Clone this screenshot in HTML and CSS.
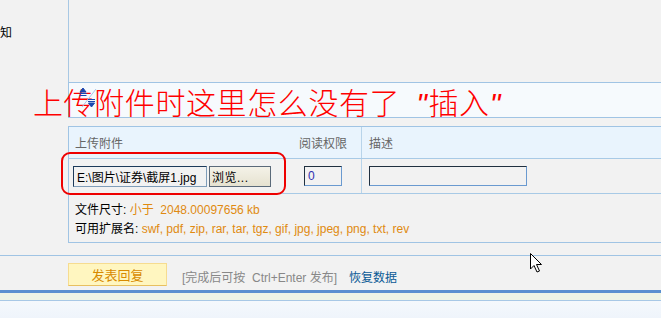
FILE: index.html
```html
<!DOCTYPE html>
<html lang="zh">
<head>
<meta charset="utf-8">
<link rel="stylesheet" href="styles.css">
</head>
<body>
<div class="page">
  <div class="top">
    <div class="top-left"><span class="zhi">知</span></div>
    <div class="top-right"></div>
  </div>
  <div class="editor-bar">
    <svg class="resize" width="20" height="24" viewBox="0 0 20 24">
      <line x1="4" y1="21" x2="18" y2="3" stroke="#a8c8ec" stroke-width="1"/>
      <path d="M2 6 L5 2 L8 6 Z" fill="#1a48b0" stroke="#1a48b0" stroke-width="1" stroke-linejoin="round"/>
      <path d="M1.5 7.5 H8.5 M1.5 9.5 H8.5" stroke="#1a48b0" stroke-width="1.2"/>
      <path d="M10 13.5 H17 M10 15.5 H17" stroke="#1a48b0" stroke-width="1.2"/>
      <path d="M10.5 17 L13.5 21 L16.5 17 Z" fill="#1a48b0" stroke="#1a48b0" stroke-width="1" stroke-linejoin="round"/>
    </svg>
  </div>
  <div class="attach">
    <div class="row head">
      <div class="c1">上传附件</div>
      <div class="c2">阅读权限</div>
      <div class="c3">描述</div>
    </div>
    <div class="row body">
      <div class="c1">
        <span class="file">E:\图片\证券\截屏1.jpg</span><span class="browse">浏览...</span>
      </div>
      <div class="c2"><span class="num">0</span></div>
      <div class="c3"><span class="desc"></span></div>
    </div>
    <div class="info">
      <div>文件尺寸: <span class="o">小于&nbsp; 2048.00097656 kb</span></div>
      <div>可用扩展名: <span class="o">swf, pdf, zip, rar, tar, tgz, gif, jpg, jpeg, png, txt, rev</span></div>
    </div>
  </div>
  <div class="sep"></div>
  <div class="actions">
    <span class="submit">发表回复</span>
    <span class="hint">[完成后可按&nbsp; Ctrl+Enter 发布]</span>
    <span class="restore">恢复数据</span>
  </div>
  <div class="footer"><div class="band"></div></div>

  <div class="note">上传附件时这里怎么没有了<span class="q1">"</span>插入<span class="q2">"</span></div>
  <div class="ring"></div>
  <svg class="cursor" width="14" height="22" viewBox="0 0 14 22">
    <path d="M1.5 1.5 V17 L5 13.5 L8 20 L10.5 19 L7.5 12.5 H12.5 Z" fill="#fff" stroke="#000" stroke-width="1"/>
  </svg>
</div>
</body>
</html>
```

FILE: styles.css
```css
html, body { margin: 0; padding: 0; }
* { box-sizing: border-box; }
body {
  background: #f2f2f2;
  font-family: "Liberation Sans", "Noto Sans CJK SC", sans-serif;
  font-size: 12px;
  color: #000;
}
.page { position: relative; width: 661px; height: 318px; overflow: hidden; }

.top { display: flex; height: 82px; }
.top-left { width: 68px; }
.zhi { display: block; margin-top: 23px; margin-left: 0; font-size: 12px; }
.top-right { flex: 1; border-left: 1px solid #a8c8e4; }

.editor-bar {
  margin-left: 68px;
  height: 36px;
  background: #f6fafd;
  border-top: 1px solid #a0c4e4;
  border-bottom: 1px solid #a0c4e4;
  border-left: 1px solid #a0c4e4;
}
.resize { display: block; margin: 3px 0 0 9px; position: relative; z-index: 2; }

.attach {
  margin: 8px 0 0 68px;
  height: 117px;
  border-top: 1px solid #a0c4e4;
  border-bottom: 1px solid #a0c4e4;
  border-left: 1px solid #a0c4e4;
}
.row { display: flex; }
.row.head {
  height: 32px;
  background: #e9f4fd;
  border-bottom: 1px solid #a8cae6;
  color: #666;
}
.row.body {
  height: 35px;
  border-bottom: 1px solid #a8cae6;
}
.c1 { width: 225px; padding-left: 6px; display: flex; align-items: center; }
.row.body .c1 { padding-left: 4px; }
.c2 { width: 68px; padding-left: 5px; border-right: 1px solid #b8d4ea; display: flex; align-items: center; }
.c3 { flex: 1; padding-left: 7px; display: flex; align-items: center; }

.file {
  width: 134px; height: 21px;
  border: 1px solid #7f9db9;
  border-top-color: #1c3a5a; border-left-color: #1c3a5a;
  background: #f2f2f2;
  display: flex; align-items: center; padding-left: 3px;
  font-size: 12px; color: #000; white-space: nowrap;
}
.browse {
  margin-left: 2px; width: 62px; height: 21px;
  border: 1px solid #5a6a7a;
  background: linear-gradient(#f4f2e8, #e6e2d0);
  display: flex; align-items: center; padding-left: 2px; color: #000;
  letter-spacing: 0.5px;
}
.num {
  margin-left: 5px; width: 38px; height: 20px;
  border: 1px solid #6a9ad0; border-top-color: #203040; border-left-color: #203040;
  display: flex; align-items: center; padding-left: 3px;
  color: #3030b0;
}
.desc {
  width: 158px; height: 20px;
  border: 1px solid #6a9ad0; border-top-color: #203040; border-left-color: #203040;
}

.info { padding: 7px 0 0 6px; line-height: 19px; }
.o { color: #e08a10; }

.sep { height: 13px; border-bottom: 1px solid #a0c4e4; }

.actions { display: flex; align-items: center; height: 34px; padding-left: 68px; }
.submit {
  width: 99px; height: 23px; margin-top: 2px;
  background: #fff6c0;
  border: 1px solid #f6dc90; border-bottom-color: #e8c060;
  color: #d88a00; font-size: 13px;
  display: flex; align-items: center; justify-content: center;
}
.hint { margin-left: 15px; margin-top: 7px; color: #888; }
.restore { margin-left: 12px; margin-top: 7px; color: #0a5a96; }

.footer {
  border-top: 3px solid #5b90d0;
  height: 30px;
  background: linear-gradient(#f8fafd, #eef4fb);
}
.band { height: 8px; background: #eef4e6; border-bottom: 1px solid #a8c8e6; }

.note {
  position: absolute; left: 33px; top: 82px;
  font-size: 30px; line-height: 38px; color: #ff0000;
  font-family: "Noto Sans CJK SC", sans-serif; font-weight: 300;
  white-space: nowrap; letter-spacing: 0.6px;
}
.q1 { font-family: "Liberation Sans", sans-serif; font-style: italic; margin: 0 1px 0 16px; }
.q2 { font-family: "Liberation Sans", sans-serif; font-style: italic; }
.ring {
  position: absolute; left: 61px; top: 152px; width: 225px; height: 43px;
  border: 2.5px solid #ee0000; border-radius: 9px;
}
.cursor { position: absolute; left: 529px; top: 252px; }
```
